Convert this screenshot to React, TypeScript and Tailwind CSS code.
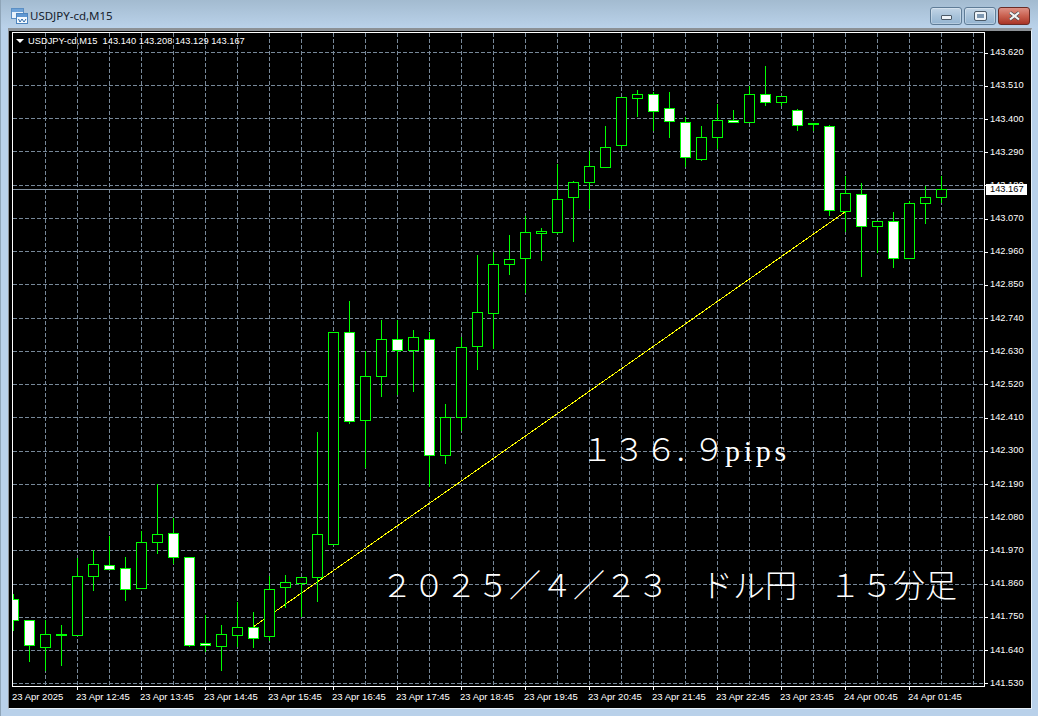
const gridY = [52, 85, 118, 151, 185, 218, 251, 284, 318, 351, 384, 417, 451, 484, 517, 550, 584, 617, 650, 683]
const gridX = Array.from({ length: 30 }, (_, i) => 45 + i * 32)

const prices = ['143.620', '143.510', '143.400', '143.290', '143.180', '143.070', '142.960', '142.850', '142.740', '142.630', '142.520', '142.410', '142.300', '142.190', '142.080', '141.970', '141.860', '141.750', '141.640', '141.530']

const times = ['23 Apr 2025', '23 Apr 12:45', '23 Apr 13:45', '23 Apr 14:45', '23 Apr 15:45', '23 Apr 16:45', '23 Apr 17:45', '23 Apr 18:45', '23 Apr 19:45', '23 Apr 20:45', '23 Apr 21:45', '23 Apr 22:45', '23 Apr 23:45', '24 Apr 00:45', '24 Apr 01:45']

// high, low, body top, body bottom, 1 = down bar (white)
const bars: number[][] = [
  [594, 630, 599, 620, 1], [620, 661, 620, 645, 1], [620, 670, 634, 647, 0], [625, 665, 634, 635, 0],
  [558, 635, 576, 635, 0], [550, 590, 564, 576, 0], [536, 569, 565, 569, 1], [557, 600, 568, 589, 1],
  [531, 588, 542, 588, 0], [484, 553, 534, 542, 0], [518, 563, 533, 557, 1], [557, 646, 557, 645, 1],
  [615, 651, 643, 645, 1], [625, 670, 634, 646, 0], [602, 646, 627, 635, 0], [612, 647, 627, 638, 1],
  [576, 640, 589, 636, 0], [575, 607, 582, 587, 0], [577, 616, 577, 583, 0], [432, 601, 534, 577, 0],
  [332, 544, 332, 544, 0], [301, 423, 332, 421, 1], [351, 467, 376, 420, 0], [320, 396, 339, 376, 0],
  [320, 394, 339, 350, 1], [330, 391, 337, 350, 0], [332, 486, 339, 455, 1], [404, 463, 417, 455, 0],
  [337, 430, 347, 417, 0], [255, 369, 312, 346, 0], [252, 348, 264, 313, 0], [235, 274, 259, 264, 0],
  [216, 292, 232, 258, 0], [228, 260, 231, 233, 0], [164, 233, 199, 232, 0], [181, 241, 182, 197, 0],
  [151, 208, 166, 182, 0], [126, 167, 147, 167, 0], [97, 148, 97, 145, 0], [90, 116, 94, 98, 0],
  [92, 130, 94, 111, 1], [92, 137, 108, 121, 1], [117, 166, 122, 157, 1], [126, 160, 137, 159, 0],
  [104, 148, 120, 137, 0], [110, 122, 120, 122, 1], [86, 122, 94, 122, 0], [66, 105, 94, 102, 1],
  [96, 105, 96, 102, 0], [109, 130, 110, 125, 1], [123, 130, 123, 124, 0], [125, 215, 126, 210, 1],
  [176, 231, 193, 211, 0], [183, 276, 194, 226, 1], [221, 252, 221, 226, 0], [212, 267, 221, 258, 1],
  [201, 258, 203, 258, 0], [186, 223, 197, 203, 0], [176, 202, 189, 197, 0],
]

const Chart = () => (
  <svg width="973" height="655" viewBox="12 32 973 655" className="block" shapeRendering="crispEdges">
    {/* グリッド */}
    {gridY.map((y) => (
      <line key={y} x1="13" x2="984" y1={y + 0.5} y2={y + 0.5} stroke="#778899" strokeDasharray="4 2" />
    ))}
    {gridX.map((x) => (
      <line key={x} x1={x + 0.5} x2={x + 0.5} y1="33" y2="686" stroke="#778899" strokeDasharray="4 2" />
    ))}
    <line x1="13" x2="984" y1="189.5" y2="189.5" stroke="#8494a4" />
    <line x1="253" y1="627" x2="845" y2="212" stroke="#ffff00" />

    {bars.map(([high, low, top, bottom, down], i) => {
      const x = 13.5 + i * 16
      return (
        <g key={i} stroke="#00ff00">
          <line x1={x} x2={x} y1={high} y2={low + 1} />
          <rect x={x - 5} y={top + 0.5} width="10" height={Math.max(bottom - top, 1)} fill={down ? '#ffffff' : '#000000'} />
        </g>
      )
    })}

    <rect x="12.5" y="32.5" width="972" height="654" fill="none" stroke="#ffffff" />
  </svg>
)

const AppIcon = () => (
  <svg width="17" height="16" viewBox="0 0 17 16" className="flex-none" shapeRendering="crispEdges">
    <rect x="0.5" y="0.5" width="12" height="10" fill="#eaf3fb" stroke="#5b8fc4" />
    <rect x="1" y="1" width="11" height="3" fill="#6fa3d8" />
    <rect x="5.5" y="5.5" width="11" height="10" fill="#f5fafe" stroke="#4d84bd" />
    <rect x="6" y="6" width="10" height="3" fill="#5f97d2" />
    <path d="M7.5 11 L9 14 L11 11 L13 14 L15 11" fill="none" stroke="#2f6aa8" shapeRendering="auto" />
  </svg>
)

const WinButton = ({ children }: { children: React.ReactNode }) => (
  <div className="w-[32px] h-[18px] rounded-[3px] border border-[#5f7c97] bg-gradient-to-b from-[#c3d5e6] via-[#a9c3da] to-[#94b4d1] shadow-[inset_0_0_0_1px_rgba(255,255,255,0.3)] flex items-center justify-center">
    {children}
  </div>
)

export default function App() {
  return (
    <div className="w-[1038px] h-[716px] flex flex-col overflow-hidden bg-[#b9d1ea] border-l border-l-[#8fa5b8] font-['Liberation_Sans',sans-serif]">

      {/* タイトルバー */}
      <div className="h-[28px] flex-none flex items-center pt-[4px] pl-[10px] pr-[8px] bg-gradient-to-b from-[#a3bbd0] to-[#bad2ea]">
        <AppIcon />
        <span className="ml-[2px] text-[11.5px] text-[#16222e] font-['Noto_Sans',sans-serif]">USDJPY-cd,M15</span>

        <div className="ml-auto flex gap-[2px]">
          <WinButton>
            <div className="mt-[3px] w-[11px] h-[5px] bg-[#eef3f8] border border-[#4c5a68] rounded-[1px]" />
          </WinButton>
          <WinButton>
            <div className="w-[11px] h-[8px] border-[2px] border-[#eef3f8] outline outline-1 outline-[#4c5a68] rounded-[1px] bg-[#7f99b3]" />
          </WinButton>
          <div className="w-[32px] h-[18px] rounded-[3px] border border-[#6b2c26] bg-gradient-to-b from-[#dd9186] via-[#c9604f] to-[#a83426] flex items-center justify-center">
            <svg width="13" height="10" viewBox="0 0 13 10">
              <path d="M2 1.5 L11 8.5 M11 1.5 L2 8.5" stroke="#3d4a55" strokeWidth="3.4" />
              <path d="M2 1.5 L11 8.5 M11 1.5 L2 8.5" stroke="#f4f4f4" strokeWidth="2.2" />
            </svg>
          </div>
        </div>
      </div>

      {/* チャート本体 */}
      <div className="flex-1 ml-[7px] mr-[6px] mb-[7px] pl-[3px] pt-px bg-black border-t-[3px] border-t-[#8c9196] border-l border-l-[#8c9196] border-r border-r-[#e8f1f9] border-b border-b-[#e8f1f9]">
        <div className="flex">
          <div className="relative w-[973px] h-[655px] flex-none">
            <Chart />

            <div className="absolute left-[4px] top-[3px] flex items-center text-[9.3px] leading-[12px] text-white whitespace-pre">
              <span className="mr-[4px] w-0 h-0 border-x-[4px] border-x-transparent border-t-[4px] border-t-white" />
              <span>USDJPY-cd,M15  143.140 143.208 143.129 143.167</span>
            </div>

            <div className="absolute left-[569px] top-[399px] flex items-baseline text-white text-[32px] leading-[32px] font-light font-['Noto_Sans_CJK_JP',serif]">
              <span>１３６</span>
              <span className="w-[16px] text-[30px] font-['Liberation_Serif',serif]">.</span>
              <span>９</span>
              <span className="text-[30px] tracking-[3.75px] font-['Liberation_Serif',serif]">pips</span>
            </div>

            <div className="absolute left-[369px] top-[535px] text-white text-[32px] leading-[32px] font-light whitespace-pre font-['Noto_Sans_CJK_JP',serif]">
              ２０２５／４／２３　ドル円　１５分足
            </div>
          </div>

          {/* 価格軸 */}
          <div className="relative w-[46px] h-[655px] flex-none pt-[4.5px] flex flex-col text-[9.3px] text-white">
            {prices.map((p) => (
              <div key={p} className="h-[33.2px] flex-none flex items-center">
                <div className="w-[3px] h-px bg-white" />
                <span className="ml-[2px]">{p}</span>
              </div>
            ))}
            <div className="absolute left-px top-[152px] w-[41px] h-[11px] bg-white text-black leading-[11px] pl-[4px]">143.167</div>
          </div>
        </div>

        {/* 時間軸 */}
        <div className="flex pl-px text-[9.5px] text-white">
          {times.map((t, i) => (
            <div key={t} className="w-[64px] flex-none">
              <div className={i === 0 ? 'w-px h-[3px] bg-black' : 'w-px h-[3px] bg-white'} />
              <div className="-ml-px leading-[13px] whitespace-nowrap">{t}</div>
            </div>
          ))}
        </div>
      </div>
    </div>
  )
}
